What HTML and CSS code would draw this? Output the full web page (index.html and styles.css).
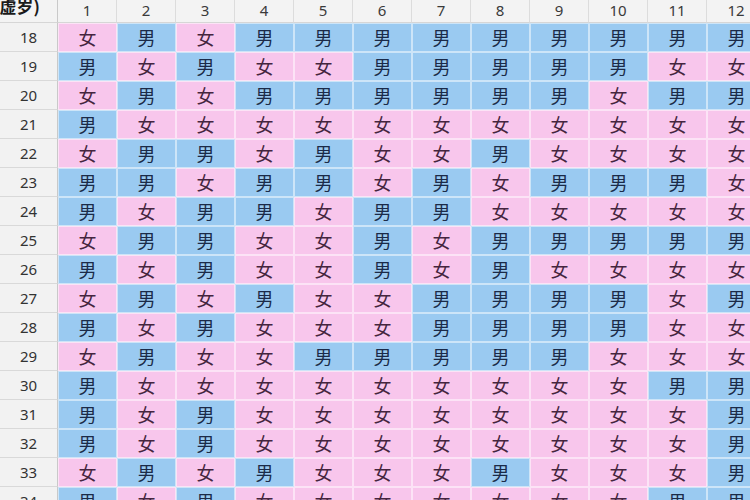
FILE: index.html
```html
<!DOCTYPE html>
<html lang="zh">
<head>
<meta charset="utf-8">
<title>生男生女表</title>
<link rel="stylesheet" href="styles.css">
</head>
<body>
<div class="sheet">
  <div class="corner"><span class="corner-text">(虚岁)</span></div>
  <div class="hd">1</div><div class="hd">2</div><div class="hd">3</div><div class="hd">4</div><div class="hd">5</div><div class="hd">6</div><div class="hd">7</div><div class="hd">8</div><div class="hd">9</div><div class="hd">10</div><div class="hd">11</div><div class="hd">12</div>

  <div class="age">18</div><div class="c g">女</div><div class="c b">男</div><div class="c g">女</div><div class="c b">男</div><div class="c b">男</div><div class="c b">男</div><div class="c b">男</div><div class="c b">男</div><div class="c b">男</div><div class="c b">男</div><div class="c b">男</div><div class="c b">男</div>
  <div class="age">19</div><div class="c b">男</div><div class="c g">女</div><div class="c b">男</div><div class="c g">女</div><div class="c g">女</div><div class="c b">男</div><div class="c b">男</div><div class="c b">男</div><div class="c b">男</div><div class="c b">男</div><div class="c g">女</div><div class="c g">女</div>
  <div class="age">20</div><div class="c g">女</div><div class="c b">男</div><div class="c g">女</div><div class="c b">男</div><div class="c b">男</div><div class="c b">男</div><div class="c b">男</div><div class="c b">男</div><div class="c b">男</div><div class="c g">女</div><div class="c b">男</div><div class="c b">男</div>
  <div class="age">21</div><div class="c b">男</div><div class="c g">女</div><div class="c g">女</div><div class="c g">女</div><div class="c g">女</div><div class="c g">女</div><div class="c g">女</div><div class="c g">女</div><div class="c g">女</div><div class="c g">女</div><div class="c g">女</div><div class="c g">女</div>
  <div class="age">22</div><div class="c g">女</div><div class="c b">男</div><div class="c b">男</div><div class="c g">女</div><div class="c b">男</div><div class="c g">女</div><div class="c g">女</div><div class="c b">男</div><div class="c g">女</div><div class="c g">女</div><div class="c g">女</div><div class="c g">女</div>
  <div class="age">23</div><div class="c b">男</div><div class="c b">男</div><div class="c g">女</div><div class="c b">男</div><div class="c b">男</div><div class="c g">女</div><div class="c b">男</div><div class="c g">女</div><div class="c b">男</div><div class="c b">男</div><div class="c b">男</div><div class="c g">女</div>
  <div class="age">24</div><div class="c b">男</div><div class="c g">女</div><div class="c b">男</div><div class="c b">男</div><div class="c g">女</div><div class="c b">男</div><div class="c b">男</div><div class="c g">女</div><div class="c g">女</div><div class="c g">女</div><div class="c g">女</div><div class="c g">女</div>
  <div class="age">25</div><div class="c g">女</div><div class="c b">男</div><div class="c b">男</div><div class="c g">女</div><div class="c g">女</div><div class="c b">男</div><div class="c g">女</div><div class="c b">男</div><div class="c b">男</div><div class="c b">男</div><div class="c b">男</div><div class="c b">男</div>
  <div class="age">26</div><div class="c b">男</div><div class="c g">女</div><div class="c b">男</div><div class="c g">女</div><div class="c g">女</div><div class="c b">男</div><div class="c g">女</div><div class="c b">男</div><div class="c g">女</div><div class="c g">女</div><div class="c g">女</div><div class="c g">女</div>
  <div class="age">27</div><div class="c g">女</div><div class="c b">男</div><div class="c g">女</div><div class="c b">男</div><div class="c g">女</div><div class="c g">女</div><div class="c b">男</div><div class="c b">男</div><div class="c b">男</div><div class="c b">男</div><div class="c g">女</div><div class="c b">男</div>
  <div class="age">28</div><div class="c b">男</div><div class="c g">女</div><div class="c b">男</div><div class="c g">女</div><div class="c g">女</div><div class="c g">女</div><div class="c b">男</div><div class="c b">男</div><div class="c b">男</div><div class="c b">男</div><div class="c g">女</div><div class="c g">女</div>
  <div class="age">29</div><div class="c g">女</div><div class="c b">男</div><div class="c g">女</div><div class="c g">女</div><div class="c b">男</div><div class="c b">男</div><div class="c b">男</div><div class="c b">男</div><div class="c b">男</div><div class="c g">女</div><div class="c g">女</div><div class="c g">女</div>
  <div class="age">30</div><div class="c b">男</div><div class="c g">女</div><div class="c g">女</div><div class="c g">女</div><div class="c g">女</div><div class="c g">女</div><div class="c g">女</div><div class="c g">女</div><div class="c g">女</div><div class="c g">女</div><div class="c b">男</div><div class="c b">男</div>
  <div class="age">31</div><div class="c b">男</div><div class="c g">女</div><div class="c b">男</div><div class="c g">女</div><div class="c g">女</div><div class="c g">女</div><div class="c g">女</div><div class="c g">女</div><div class="c g">女</div><div class="c g">女</div><div class="c g">女</div><div class="c b">男</div>
  <div class="age">32</div><div class="c b">男</div><div class="c g">女</div><div class="c b">男</div><div class="c g">女</div><div class="c g">女</div><div class="c g">女</div><div class="c g">女</div><div class="c g">女</div><div class="c g">女</div><div class="c g">女</div><div class="c g">女</div><div class="c b">男</div>
  <div class="age">33</div><div class="c g">女</div><div class="c b">男</div><div class="c g">女</div><div class="c b">男</div><div class="c g">女</div><div class="c g">女</div><div class="c g">女</div><div class="c b">男</div><div class="c g">女</div><div class="c g">女</div><div class="c g">女</div><div class="c b">男</div>
  <div class="age">34</div><div class="c b">男</div><div class="c g">女</div><div class="c b">男</div><div class="c g">女</div><div class="c g">女</div><div class="c g">女</div><div class="c g">女</div><div class="c g">女</div><div class="c g">女</div><div class="c g">女</div><div class="c b">男</div><div class="c b">男</div>
</div>
</body>
</html>
```

FILE: styles.css
```css
html, body {
  margin: 0;
  padding: 0;
  width: 750px;
  height: 500px;
  overflow: hidden;
  background: #ffffff;
}

.sheet {
  display: grid;
  grid-template-columns: 58px repeat(12, 59px);
  grid-template-rows: 23px repeat(17, 29px);
  width: 766px;
  font-family: "Noto Sans", "Noto Sans CJK SC", sans-serif;
}

.corner {
  background: #f3f3f3;
  border-right: 1px solid #c9c9c9;
  border-bottom: 1px solid #d6d6d6;
  display: flex;
  justify-content: flex-end;
  align-items: flex-start;
  overflow: hidden;
  padding-right: 17px;
}

.corner-text {
  font-family: "Noto Sans CJK SC", sans-serif;
  font-weight: 700;
  font-size: 17px;
  line-height: 17px;
  color: #1a1a1a;
  white-space: nowrap;
  margin-top: -3px;
  flex: none;
}

.hd {
  background: #f3f3f3;
  border-right: 1px solid #dcdcdc;
  border-bottom: 1px solid #d6d6d6;
  display: flex;
  align-items: center;
  justify-content: center;
  padding-bottom: 3px;
  font-size: 15px;
  color: #3a3a3a;
}

.age {
  background: #f2f2f2;
  border-right: 1px solid #c9c9c9;
  border-bottom: 1px solid #d9d9d9;
  display: flex;
  align-items: center;
  justify-content: center;
  font-size: 15px;
  color: #333333;
}

.c {
  box-sizing: border-box;
  display: flex;
  align-items: center;
  justify-content: center;
  font-family: "Noto Sans CJK SC", sans-serif;
  font-size: 18px;
  border: 1.5px solid rgba(255, 255, 255, 0.5);
  padding-bottom: 1px;
}

.b {
  background: #9acaf1;
  color: #1b2a48;
}

.g {
  background: #f8c6ec;
  color: #45253f;
}
```
